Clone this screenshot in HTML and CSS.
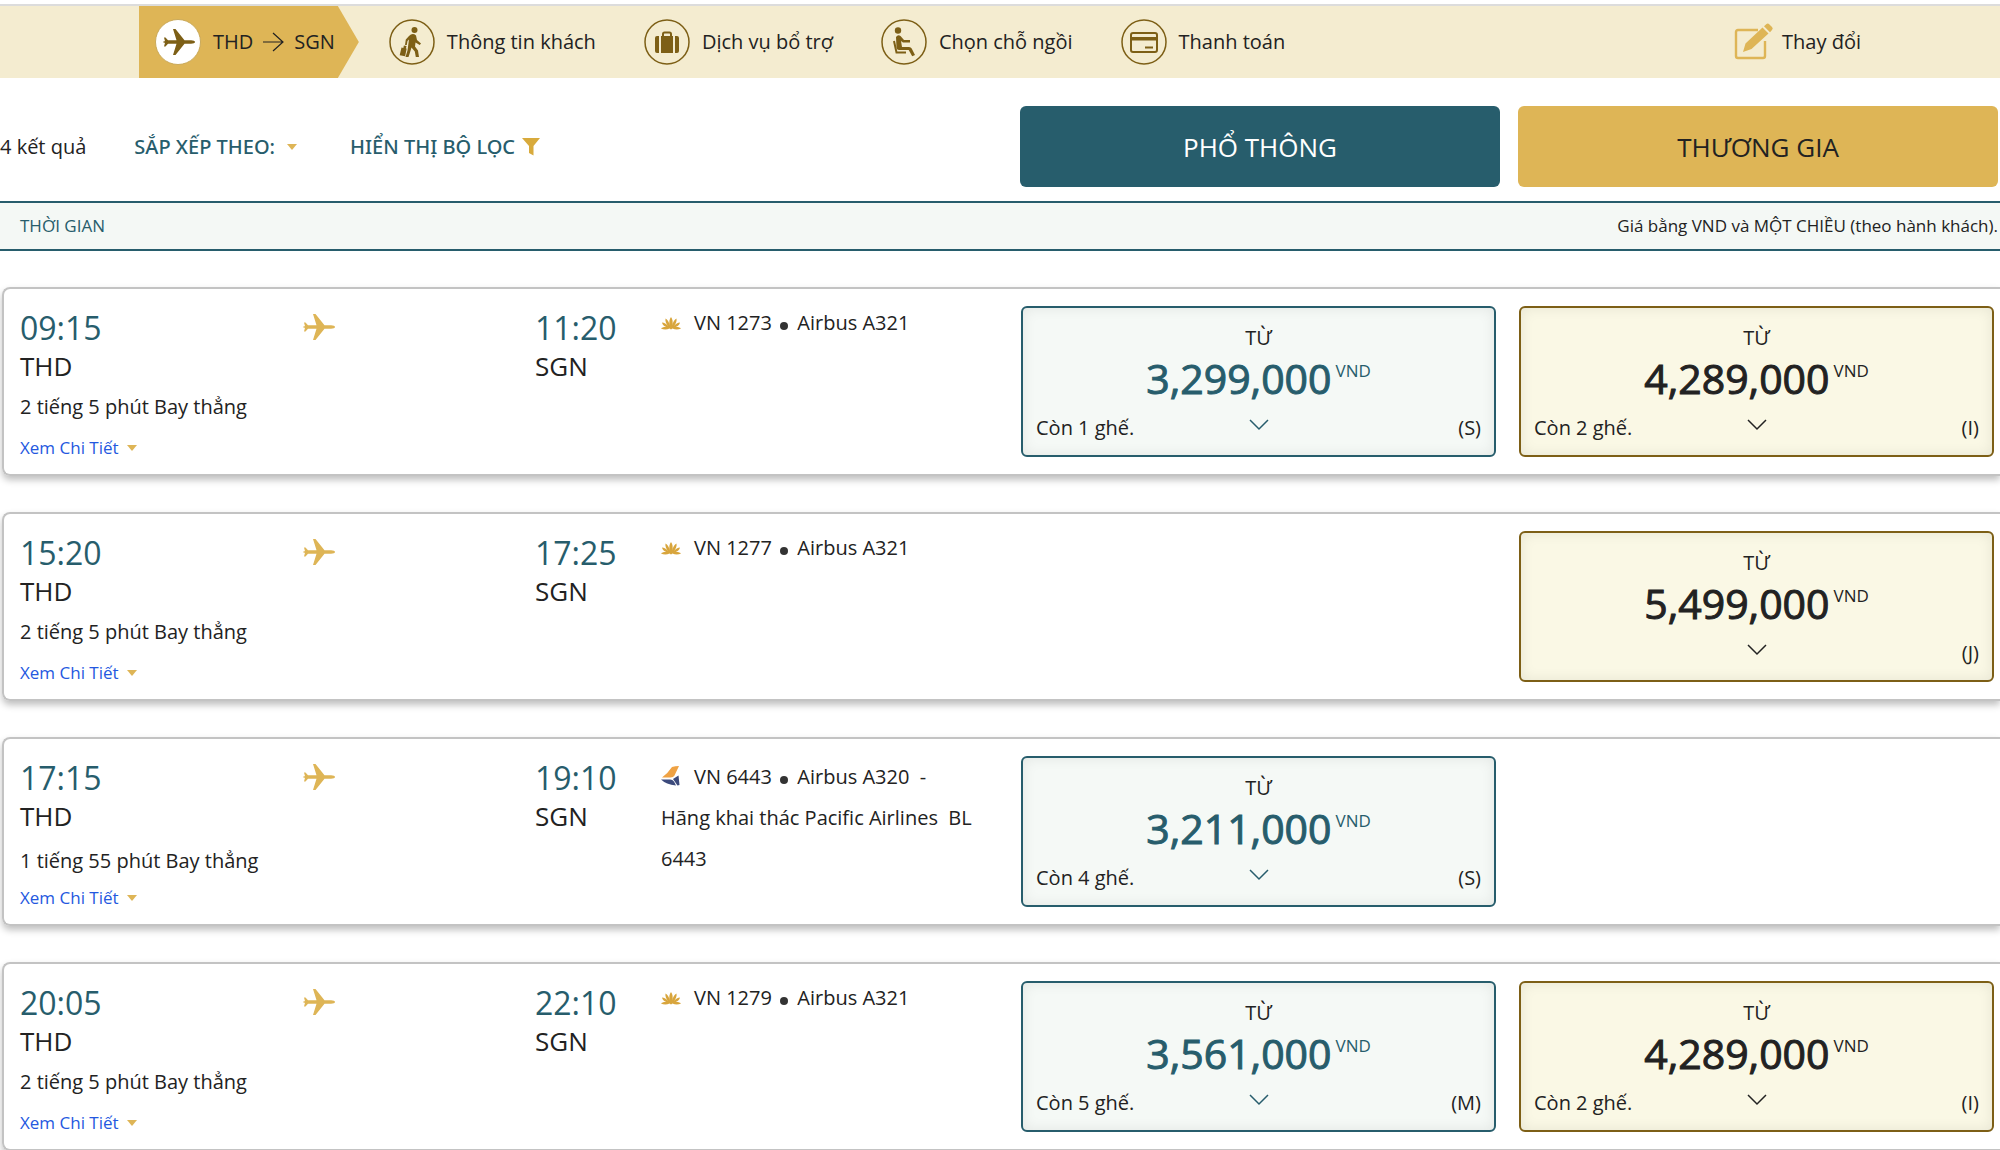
FILE: index.html
```html
<!DOCTYPE html>
<html lang="vi">
<head>
<meta charset="utf-8">
<meta name="viewport" content="width=device-width, initial-scale=1">
<title>Chọn chuyến bay THD – SGN</title>
<link rel="stylesheet" href="styles.css">
</head>
<body>
<svg class="sprite" aria-hidden="true">
  <symbol id="plane" viewBox="0 0 32 26"><path d="M32 13c0 1-1.600 1.700-4 1.700h-6.500L12.500 26H10l3.500-11.300H5l-2.500 2.800H1l1-3.700H.5v-1.600H2L1 8.500h1.500L5 11.300h8.500L10 0h2.500l9 11.300H28c2.400 0 4 .7 4 1.700z"/></symbol>
  <symbol id="chevron" viewBox="0 0 20 12"><path d="M1 1l9 9 9-9" fill="none" stroke="currentColor" stroke-width="1.500"/></symbol>
  <symbol id="lotus" viewBox="0 0 20 13"><path d="M10 0c1.600 2 2.200 5 1.200 8.500C12 5 13.500 2.500 15.500 1.500c.5 2.500-.6 5.500-2.800 7.700C14.500 7 17 5.500 19 5.500c-.4 2-2 3.700-4.200 4.600 2-.3 3.800.2 5.200 1.400-2.500 1.500-6 1.400-8.500.1L10 12.500l-1.500-.9C6 12.900 2.500 13 0 11.500c1.400-1.200 3.200-1.700 5.200-1.400C3 9.200 1.400 7.500 1 5.500c2 0 4.500 1.500 6.300 3.700C5.100 7 4 4 4.500 1.500 6.500 2.500 8 5 8.800 8.500 7.800 5 8.400 2 10 0z"/></symbol>
  <symbol id="pacific" viewBox="0 0 20 20"><path d="M11 1q3-1 7-1l-4.500 9.500q-1 2-4 2H1Q7 7 11 1z" fill="#efa244"/><path d="M0 13.500h9q3 0 4.500 3l1.500 3Q5 18.500 0 13.500z" fill="#3c4a7c"/><path d="M17.500 9.500l1 9.500-2 .5-4.500-6.500z" fill="#3c4a7c"/></symbol>
</svg>

<header class="topbar">
  <nav aria-label="Các bước đặt vé">
    <ol class="steps">
      <li class="step step--active"><a href="#flights">
        <svg class="step-icon" viewBox="0 0 46 46" aria-hidden="true"><circle cx="23" cy="23" r="22.500" fill="#fff" stroke="#c9a95a"/><use href="#plane" x="8" y="10" width="32" height="26"/></svg>
        <span class="route">THD <svg class="route-arrow" viewBox="0 0 21 20" aria-hidden="true"><path d="M0 10h20M10 1l10 9-10 9" fill="none" stroke="#222" stroke-width="1.200"/></svg> SGN</span>
      </a></li>
      <li class="step"><a href="#passengers">
        <svg class="step-icon" viewBox="0 0 46 46" aria-hidden="true"><circle class="ring" cx="23" cy="23" r="22"/><circle cx="25.500" cy="11" r="3"/><path d="M20 17q3.500-3.500 7-.5l1 4.500 4 3.500-1.300 1.500-4.200-2.500-.5 4 3 4 1 6.500h-3.200l-1-5.500-3.300-4-1.500 5-1.500 4.500h-3l2-6.500 1-7.500.5-3.500-1.500 1.500-.7 4H16l.8-5.500z"/><path d="M12.500 28.500l1.800.4.6-2.400 2.600.6-.6 2.300.8.200-1.600 7.600-5.400-1z"/></svg>
        Thông tin khách
      </a></li>
      <li class="step"><a href="#services">
        <svg class="step-icon" viewBox="0 0 46 46" aria-hidden="true"><circle class="ring" cx="23" cy="23" r="22"/><path d="M17 17h12v17H17zM11 19q0-2 2-2h2v17h-2q-2 0-2-2zM31 17h2q2 0 2 2v13q0 2-2 2h-2z"/><path d="M19 17v-2q0-1.500 1.500-1.500h5q1.500 0 1.500 1.500v2" fill="none" stroke="currentColor" stroke-width="2"/></svg>
        Dịch vụ bổ trợ
      </a></li>
      <li class="step"><a href="#seats">
        <svg class="step-icon" viewBox="0 0 46 46" aria-hidden="true"><circle class="ring" cx="23" cy="23" r="22"/><circle cx="17" cy="11.500" r="3.200"/><path d="M15 18q2-3 4.500-1l3.500 4h6v2.500h-7L20 22l1 6h7q2 0 2.700 1.500L34 36l-2.800 1.200-3.500-6.200H18q-2 0-2.500-2z"/><path d="M13 22l2.500 11.500H25" fill="none" stroke="currentColor" stroke-width="2"/></svg>
        Chọn chỗ ngồi
      </a></li>
      <li class="step"><a href="#payment">
        <svg class="step-icon" viewBox="0 0 46 46" aria-hidden="true"><circle class="ring" cx="23" cy="23" r="22"/><rect x="10" y="14" width="26" height="19" rx="2" fill="none" stroke="currentColor" stroke-width="2"/><path d="M10 18h26v3.500H10zM24 27.500h8v2h-8z"/></svg>
        Thanh toán
      </a></li>
    </ol>
  </nav>
  <a class="change" href="#search">
    <svg class="change-icon" viewBox="0 0 40 38" aria-hidden="true"><path d="M24 7H4Q2 7 2 9v24q0 2 2 2h25q2 0 2-2V18" fill="none" stroke="currentColor" stroke-width="2.400"/><path d="M9 29l2.500-8.500L28.500 4.500l6 6-17 15.500zM30 3.200l2.500-2.200q1.500-1 3 .5L38 4q1.500 1.500 0 3l-2 2.200z"/></svg>
    Thay đổi
  </a>
</header>

<div class="toolbar">
  <div class="filters">
    <span class="count">4 kết quả</span>
    <button class="tool tool--sort" type="button">SẮP XẾP THEO: <i class="caret"></i></button>
    <button class="tool" type="button">HIỂN THỊ BỘ LỌC <svg class="funnel" viewBox="0 0 18 18" aria-hidden="true"><path d="M0 0h18l-6.500 8v9.500L7 15V8z"/></svg></button>
  </div>
  <div class="cabins">
    <button class="cabin cabin--economy" type="button">PHỔ THÔNG</button>
    <button class="cabin cabin--business" type="button">THƯƠNG GIA</button>
  </div>
</div>

<div class="legend">
  <span class="legend-time">THỜI GIAN</span>
  <span>Giá bằng VND và MỘT CHIỀU (theo hành khách).</span>
</div>

<main class="flights" id="flights">
  <article class="flight">
    <div class="journey">
      <div class="depart">
        <p class="time">09:15</p><p class="airport">THD</p>
        <p class="duration">2 tiếng 5 phút Bay thẳng</p>
        <a class="details" href="#vn1273">Xem Chi Tiết <i class="caret"></i></a>
      </div>
      <svg class="plane" aria-hidden="true"><use href="#plane"/></svg>
      <div class="arrive"><p class="time">11:20</p><p class="airport">SGN</p></div>
      <p class="info"><svg class="carrier" aria-hidden="true"><use href="#lotus"/></svg>VN 1273 <i class="dot"></i> Airbus A321</p>
    </div>
    <div class="fares">
      <button class="fare fare--economy" type="button">
        <span class="from">TỪ</span>
        <span class="price">3,299,000<span class="currency">VND</span></span>
        <span class="seats">Còn 1 ghế.</span><svg class="chevron" aria-hidden="true"><use href="#chevron"/></svg><span class="class">(S)</span>
      </button>
      <button class="fare fare--business" type="button">
        <span class="from">TỪ</span>
        <span class="price">4,289,000<span class="currency">VND</span></span>
        <span class="seats">Còn 2 ghế.</span><svg class="chevron" aria-hidden="true"><use href="#chevron"/></svg><span class="class">(I)</span>
      </button>
    </div>
  </article>

  <article class="flight">
    <div class="journey">
      <div class="depart">
        <p class="time">15:20</p><p class="airport">THD</p>
        <p class="duration">2 tiếng 5 phút Bay thẳng</p>
        <a class="details" href="#vn1277">Xem Chi Tiết <i class="caret"></i></a>
      </div>
      <svg class="plane" aria-hidden="true"><use href="#plane"/></svg>
      <div class="arrive"><p class="time">17:25</p><p class="airport">SGN</p></div>
      <p class="info"><svg class="carrier" aria-hidden="true"><use href="#lotus"/></svg>VN 1277 <i class="dot"></i> Airbus A321</p>
    </div>
    <div class="fares">
      <button class="fare fare--business" type="button">
        <span class="from">TỪ</span>
        <span class="price">5,499,000<span class="currency">VND</span></span>
        <svg class="chevron" aria-hidden="true"><use href="#chevron"/></svg><span class="class">(J)</span>
      </button>
    </div>
  </article>

  <article class="flight flight--codeshare">
    <div class="journey">
      <div class="depart">
        <p class="time">17:15</p><p class="airport">THD</p>
        <p class="duration">1 tiếng 55 phút Bay thẳng</p>
        <a class="details" href="#vn6443">Xem Chi Tiết <i class="caret"></i></a>
      </div>
      <svg class="plane" aria-hidden="true"><use href="#plane"/></svg>
      <div class="arrive"><p class="time">19:10</p><p class="airport">SGN</p></div>
      <p class="info"><svg class="carrier carrier--pacific" aria-hidden="true"><use href="#pacific"/></svg>VN 6443 <i class="dot"></i> Airbus A320&nbsp; -<br>Hãng khai thác Pacific Airlines&nbsp; BL 6443</p>
    </div>
    <div class="fares">
      <button class="fare fare--economy" type="button">
        <span class="from">TỪ</span>
        <span class="price">3,211,000<span class="currency">VND</span></span>
        <span class="seats">Còn 4 ghế.</span><svg class="chevron" aria-hidden="true"><use href="#chevron"/></svg><span class="class">(S)</span>
      </button>
    </div>
  </article>

  <article class="flight">
    <div class="journey">
      <div class="depart">
        <p class="time">20:05</p><p class="airport">THD</p>
        <p class="duration">2 tiếng 5 phút Bay thẳng</p>
        <a class="details" href="#vn1279">Xem Chi Tiết <i class="caret"></i></a>
      </div>
      <svg class="plane" aria-hidden="true"><use href="#plane"/></svg>
      <div class="arrive"><p class="time">22:10</p><p class="airport">SGN</p></div>
      <p class="info"><svg class="carrier" aria-hidden="true"><use href="#lotus"/></svg>VN 1279 <i class="dot"></i> Airbus A321</p>
    </div>
    <div class="fares">
      <button class="fare fare--economy" type="button">
        <span class="from">TỪ</span>
        <span class="price">3,561,000<span class="currency">VND</span></span>
        <span class="seats">Còn 5 ghế.</span><svg class="chevron" aria-hidden="true"><use href="#chevron"/></svg><span class="class">(M)</span>
      </button>
      <button class="fare fare--business" type="button">
        <span class="from">TỪ</span>
        <span class="price">4,289,000<span class="currency">VND</span></span>
        <span class="seats">Còn 2 ghế.</span><svg class="chevron" aria-hidden="true"><use href="#chevron"/></svg><span class="class">(I)</span>
      </button>
    </div>
  </article>
</main>
</body>
</html>
```
FILE: styles.css
```css
:root {
  --teal: #275d6c;
  --gold: #deb556;
  --brown: #7d5f16;
  --ink: #222;
}

* { box-sizing: border-box; }

body {
  margin: 0;
  background: #fff;
  color: var(--ink);
  font: 20px/28px "Open Sans", "Noto Sans", sans-serif;
}

p { margin: 0; }
a { color: inherit; text-decoration: none; }
button { font: inherit; color: inherit; cursor: pointer; padding: 0; }
svg { fill: currentColor; }
.sprite { display: none; }

/* Booking steps */
.topbar {
  display: flex;
  justify-content: space-between;
  align-items: center;
  margin-top: 4px;
  padding: 0 139px;
  border-top: 2px solid #dcdcdc;
  background: #f4ecd0;
}
.steps {
  display: flex;
  gap: 48px;
  margin: 0;
  padding: 0;
  list-style: none;
}
.step a {
  display: flex;
  align-items: center;
  gap: 12px;
  height: 72px;
}
.step-icon { width: 46px; height: 46px; color: var(--brown); }
.ring { fill: none; stroke: currentColor; stroke-width: 1.500px; }
.step--active { margin-right: -18px; }
.step--active a {
  padding: 0 24px 0 16px;
  background: var(--gold);
  clip-path: polygon(0 0, calc(100% - 21px) 0, 100% 50%, calc(100% - 21px) 100%, 0 100%);
}
.route { display: flex; align-items: center; gap: 10px; }
.route-arrow { width: 21px; height: 20px; }
.change { display: flex; align-items: center; gap: 8px; }
.change-icon { width: 40px; height: 38px; color: var(--gold); }

/* Result tools and cabin tabs */
.toolbar {
  display: grid;
  grid-template-columns: 1020fr 978fr;
  align-items: center;
  padding: 28px 2px 14px 0;
}
.filters { display: flex; align-items: center; }
.tool {
  display: flex;
  align-items: center;
  border: 0;
  background: none;
  color: var(--teal);
  font-family: "Noto Sans", "Open Sans", sans-serif;
  font-weight: 500;
}
.count { margin-right: 48px; }
.tool--sort { gap: 12px; margin-right: 53px; }
.caret {
  border: 5px solid transparent;
  border-top: 6px solid var(--gold);
  border-bottom: 0;
}
.funnel { width: 18px; height: 18px; margin-left: 7px; color: #d8aa3c; }
.cabins { display: grid; grid-template-columns: 1fr 1fr; gap: 18px; }
.cabin {
  height: 81px;
  border: 0;
  border-radius: 6px;
  font-size: 26px;
}
.cabin--economy { background: var(--teal); color: #fff; }
.cabin--business { background: var(--gold); }

.legend {
  display: flex;
  justify-content: space-between;
  padding: 9px 2px 9px 20px;
  border: solid var(--teal);
  border-width: 2px 0;
  background: #f4f8f5;
  font-size: 17px;
}
.legend-time { color: var(--teal); }

/* Flight cards */
.flights {
  display: grid;
  gap: 36px;
  padding: 36px 0 0 2px;
}
.flight {
  display: grid;
  grid-template-columns: 1017fr 973fr;
  padding: 17px 6px 14px 0;
  border: 2px solid #c3c3c3;
  border-right: 0;
  border-radius: 8px 0 0 8px;
  box-shadow: 0 4px 7px rgba(0, 0, 0, .25);
}
.journey {
  display: grid;
  grid-template-columns: 299fr 232fr 126fr 360fr;
  align-items: start;
}
.depart { padding-left: 16px; white-space: nowrap; }
.time { color: var(--teal); font-size: 32px; line-height: 44px; }
.airport { font-size: 26px; line-height: 32px; }
.duration { padding-top: 10px; line-height: 30px; }
.details {
  display: flex;
  align-items: center;
  gap: 8px;
  padding-top: 14px;
  color: #2458e0;
  font-size: 17px;
  line-height: 24px;
}
.plane { width: 32px; height: 26px; margin-top: 8px; color: var(--gold); }
.info { padding-right: 36px; line-height: 41px; margin-top: -4px; }
.carrier {
  width: 20px;
  height: 13px;
  margin-right: 13px;
  color: #d8a53c;
}
.carrier--pacific { height: 20px; vertical-align: -2px; }
.dot {
  display: inline-block;
  width: 8px;
  height: 8px;
  margin: 0 4px 0 3px;
  border-radius: 50%;
  background: #333;
}
.flight--codeshare .info { margin-top: 0; }
.flight--codeshare .duration { padding-top: 14px; }
.flight--codeshare .details { padding-top: 10px; }

/* Fares */
.fares {
  display: grid;
  grid-template-columns: 1fr 1fr;
  gap: 23px;
  align-items: start;
}
.fare {
  display: grid;
  grid-template-columns: 1fr auto 1fr;
  grid-template-rows: 28px 52px 48px;
  align-content: start;
  align-items: center;
  height: 151px;
  padding: 16px 13px 0;
  border: 2px solid;
  border-radius: 6px;
  box-shadow: inset 0 0 14px rgba(0, 0, 0, .08);
}
.fare--economy { grid-column: 1; border-color: var(--teal); background: #f5f9f6; }
.fare--business { grid-column: 2; border-color: var(--brown); background: #faf8e5; }
.from, .price { grid-column: 1 / -1; }
.price {
  display: flex;
  justify-content: center;
  gap: 4px;
  font-size: 41px;
  line-height: 52px;
  -webkit-text-stroke: 1px currentColor;
}
.currency { font-size: 17px; line-height: 38px; -webkit-text-stroke: 0; }
.fare--economy .price, .fare--economy .chevron { color: var(--teal); }
.seats { grid-column: 1; text-align: left; }
.chevron { grid-column: 2; width: 20px; height: 12px; margin-bottom: 6px; }
.class { grid-column: 3; text-align: right; }
```
